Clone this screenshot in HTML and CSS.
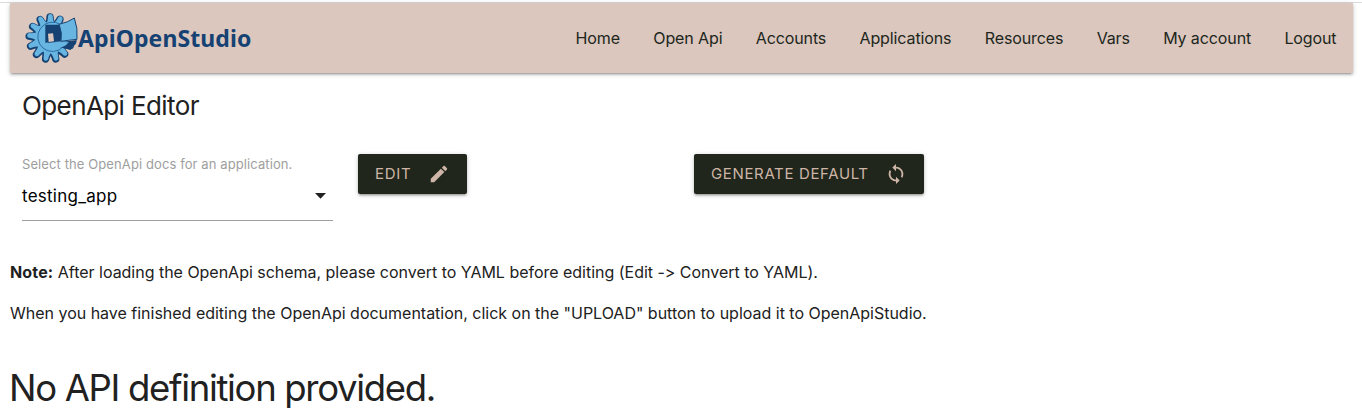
FILE: index.html
```html
<!DOCTYPE html>
<html lang="en">
<head>
<meta charset="utf-8">
<title>OpenApi Editor</title>
<link rel="stylesheet" href="styles.css">
</head>
<body>
<nav class="navbar">
  <a class="brand">
    <svg class="brand-mark" viewBox="15 12 159 156" aria-hidden="true">
      <defs>
        <path id="tooth" d="M77 50 Q84 42 84 24 Q85 18 91 18 Q97 18 98 24 Q99 42 107 50 Z"/>
        <g id="gear">
          <circle cx="92" cy="89" r="46"/>
          <use href="#tooth"/>
          <use href="#tooth" transform="rotate(27.7 92 89)"/>
          <use href="#tooth" transform="rotate(110.8 92 89)"/>
          <use href="#tooth" transform="rotate(138.5 92 89)"/>
          <use href="#tooth" transform="rotate(166.2 92 89)"/>
          <use href="#tooth" transform="rotate(193.8 92 89)"/>
          <use href="#tooth" transform="rotate(221.5 92 89)"/>
          <use href="#tooth" transform="rotate(249.2 92 89)"/>
          <use href="#tooth" transform="rotate(276.9 92 89)"/>
          <use href="#tooth" transform="rotate(304.6 92 89)"/>
          <use href="#tooth" transform="rotate(332.3 92 89)"/>
        </g>
      </defs>
      <use href="#gear" class="navy-outline" transform="translate(-1 2)"/>
      <use href="#gear" class="sky"/>
      <path class="ring" d="M122 50 A44 44 0 1 0 130 116"/>
      <path class="navy" d="M78 51 L124 53 L119 72 L105 76 L105 101 L134 101 L170 96 Q170 112 158 114 L152 126 L128 120 L84 104 Z"/>
      <path class="sky" d="M80 104 L123 101 L146 103 Q134 119 115 119 Q94 118 80 104 Z"/>
      <path class="navy" d="M76 50 L118 50 Q127 76 122 100 L76 104 Z"/>
      <path class="paper" d="M84 77 L99 76 L102 100 L86 102 Z"/>
      <path class="sky edge" d="M117 49 Q145 43 163 30 Q174 60 171 94 Q143 97 123 100 Q128 75 117 49 Z"/>
    </svg>
    <span class="brand-name">ApiOpenStudio</span>
  </a>
  <ul class="menu">
    <li>Home</li><li>Open Api</li><li>Accounts</li><li>Applications</li><li>Resources</li><li>Vars</li><li>My account</li><li>Logout</li>
  </ul>
</nav>
<main>
  <h1 class="title">OpenApi Editor</h1>
  <div class="controls">
    <div class="field">
      <label class="field-label">Select the OpenApi docs for an application.</label>
      <div class="select"><span>testing_app</span>
        <svg class="caret" viewBox="0 0 11 6"><path d="M0 0h11L5.500 5.700z"/></svg>
      </div>
    </div>
    <div class="action"><button class="btn"><span class="edit-text">EDIT</span>
      <svg class="icon" viewBox="0 0 24 24"><path d="M3 17.250V21h3.750L17.810 9.940l-3.750-3.750L3 17.250zM20.710 7.040c.39-.39.39-1.020 0-1.410l-2.340-2.340c-.39-.39-1.020-.39-1.410 0l-1.830 1.830 3.750 3.750 1.830-1.830z"/></svg>
    </button></div>
    <div class="action"><button class="btn generate"><span>GENERATE DEFAULT</span>
      <svg class="icon" viewBox="0 0 24 24"><path d="M12 4V1L8 5l4 4V6c3.310 0 6 2.690 6 6 0 1.010-.25 1.970-.7 2.800l1.460 1.460C19.540 15.030 20 13.570 20 12c0-4.420-3.580-8-8-8zm0 14c-3.310 0-6-2.690-6-6 0-1.010.25-1.970.7-2.800L5.240 7.740C4.460 8.970 4 10.430 4 12c0 4.420 3.580 8 8 8v3l4-4-4-4v3z"/></svg>
    </button></div>
  </div>
  <p class="note first"><b>Note:</b> After loading the OpenApi schema, please convert to YAML before editing (Edit -&gt; Convert to YAML).</p>
  <p class="note second">When you have finished editing the OpenApi documentation, click on the "UPLOAD" button to upload it to OpenApiStudio.</p>
  <h2 class="empty">No API definition provided.</h2>
</main>
</body>
</html>
```
FILE: styles.css
```css
* { box-sizing: border-box; }
html { overflow: hidden; }
body {
  margin: 0;
  padding: 0 9px 0 10px;
  background: linear-gradient(#fff 2px, #dadce0 2px, #dadce0 3px, #fff 3px);
  color: #212121;
  font-family: Inter, "Liberation Sans", sans-serif;
  font-size: 16px;
  font-feature-settings: "calt" 0;
}
.navbar {
  display: flex;
  align-items: center;
  justify-content: space-between;
  height: 70px;
  margin-top: 3px;
  padding: 0 16.500px 0 15px;
  background: #dbc7be;
  box-shadow: 0 2px 2px 0 rgba(0,0,0,.14), 0 3px 1px -2px rgba(0,0,0,.12), 0 1px 5px 0 rgba(0,0,0,.2);
}
.brand { display: flex; align-items: center; color: #154273; }
.brand-mark { width: 53px; height: 52px; display: block; }
.brand-name { font: 700 23px/30px "Noto Sans", sans-serif; letter-spacing: .1px; }
.navy, .navy-outline { fill: #154273; }
.navy-outline { stroke: #154273; stroke-width: 8; }
.sky { fill: #68b5e1; }
.edge { stroke: #154273; stroke-width: 3; }
.paper { fill: #dbc7be; }
.ring { fill: none; stroke: #2b6da4; stroke-width: 3; }
.menu {
  display: flex;
  gap: 33.300px;
  margin: 0;
  padding: 0;
  list-style: none;
  color: #20261b;
  letter-spacing: -.11px;
  white-space: nowrap;
}
.title { margin: 16px 0 0 12px; font-size: 26px; font-weight: 400; line-height: 34px; letter-spacing: -.6px; }
.controls { display: grid; grid-template-columns: 336px 336px 1fr; margin: 31px 0 0 12px; height: 67px; }
.field { width: 311px; height: 67px; border-bottom: 1px solid #9e9e9e; color: #9e9e9e; }
.field-label { display: block; font-size: 13px; line-height: 21px; letter-spacing: .1px; white-space: nowrap; }
.select { display: flex; align-items: center; justify-content: space-between; height: 42px; padding-right: 7px; color: #000; font-size: 17px; letter-spacing: .25px; }
.caret { width: 11px; height: 6px; fill: #212121; }
.btn {
  display: flex;
  align-items: center;
  gap: 17px;
  height: 40px;
  padding: 0 17px;
  border: 0;
  border-radius: 2px;
  background: #20261b;
  color: #ceb5a7;
  font: 400 15px/40px Inter, sans-serif;
  letter-spacing: .7px;
  white-space: nowrap;
  box-shadow: 0 2px 2px 0 rgba(0,0,0,.14), 0 3px 1px -2px rgba(0,0,0,.12), 0 1px 5px 0 rgba(0,0,0,.2);
}
.generate { gap: 16px; letter-spacing: .64px; }
.icon { width: 22px; height: 22px; fill: currentColor; }
.note { margin: 0; line-height: 24px; white-space: nowrap; }
.first { margin-top: 39px; letter-spacing: -.02px; }
.first b { letter-spacing: .15px; }
.second { margin-top: 17px; letter-spacing: -.01px; }
.empty { margin: 39px 0 0 -1px; font-size: 36.500px; font-weight: 420; line-height: 48px; letter-spacing: -1.320px; white-space: nowrap; }
```
